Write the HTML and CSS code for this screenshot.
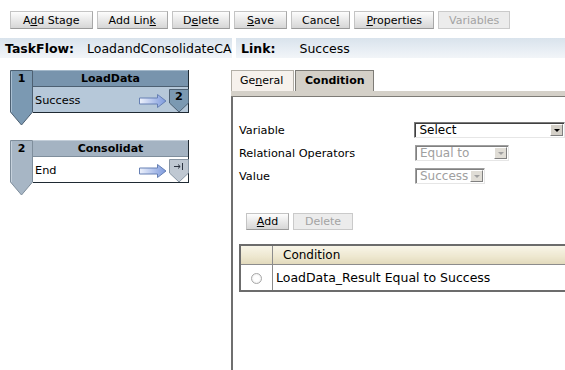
FILE: index.html
```html
<!DOCTYPE html>
<html lang="en">
<head>
    <meta charset="UTF-8">
    <title>TaskFlow Editor</title>
    <link rel="stylesheet" href="styles.css">
</head>
<body>
    <div class="toolbar">
        <button class="wide">A<u>d</u>d Stage</button>
        <button class="mid">Add Lin<u>k</u></button>
        <button>D<u>e</u>lete</button>
        <button class="wide"><u>S</u>ave</button>
        <button>Cance<u>l</u></button>
        <button class="mid"><u>P</u>roperties</button>
        <button class="disabled">Variables</button>
    </div>

    <div class="infobar">
        <div class="info taskflow"><b>TaskFlow:</b><span>LoadandConsolidateCA</span></div>
        <div class="info link"><b>Link:</b><span>Success</span></div>
    </div>

    <div class="main">
        <div class="canvas">
            <div class="stage">
                <div class="stage-num">
                    <svg width="24" height="56" viewBox="0 0 24 56"><polygon points="0.5,0.5 22.5,0.5 22.5,42 11.5,55 0.5,42" fill="#7b99b2" stroke="#4d6072"/><line x1="1.5" y1="1.5" x2="1.5" y2="42" stroke="#a9bfd2"/></svg>
                    <span>1</span>
                </div>
                <div class="stage-box">
                    <div class="stage-title">LoadData</div>
                    <div class="stage-body">
                        <span>Success</span>
                        <svg class="arrow" width="28" height="14" viewBox="0 0 28 14"><defs><linearGradient id="ar" x1="0" x2="1"><stop offset="0" stop-color="#eef2fc"/><stop offset="1" stop-color="#7b98dc"/></linearGradient></defs><polygon points="0.5,4 18.5,4 18.5,0.5 27,7 18.5,13.5 18.5,10 0.5,10" fill="url(#ar)" stroke="#6680b4"/></svg>
                        <div class="badge">
                            <svg width="20" height="24" viewBox="0 0 20 24"><polygon points="0.5,0.5 19.5,0.5 19.5,14 10,23 0.5,14" fill="#7b99b2" stroke="#4d6072"/></svg>
                            <span>2</span>
                        </div>
                    </div>
                </div>
            </div>

            <div class="stage stage-end">
                <div class="stage-num">
                    <svg width="24" height="56" viewBox="0 0 24 56"><polygon points="0.5,0.5 22.5,0.5 22.5,42 11.5,55 0.5,42" fill="#a7b6c5" stroke="#7f8e9c"/><line x1="1.5" y1="1.5" x2="1.5" y2="42" stroke="#c6d1dc"/></svg>
                    <span>2</span>
                </div>
                <div class="stage-box">
                    <div class="stage-title">Consolidat</div>
                    <div class="stage-body">
                        <span>End</span>
                        <svg class="arrow" width="28" height="14" viewBox="0 0 28 14"><defs><linearGradient id="ar2" x1="0" x2="1"><stop offset="0" stop-color="#eef2fc"/><stop offset="1" stop-color="#7b98dc"/></linearGradient></defs><polygon points="0.5,4 18.5,4 18.5,0.5 27,7 18.5,13.5 18.5,10 0.5,10" fill="url(#ar2)" stroke="#6680b4"/></svg>
                        <div class="badge">
                            <svg width="20" height="24" viewBox="0 0 20 24"><polygon points="0.5,0.5 19.5,0.5 19.5,14 10,23 0.5,14" fill="#bfc8d2" stroke="#8795a3"/><path d="M5 7.5h6M9 5.5l2.2 2-2.2 2M13.5 4v7" fill="none" stroke="#2c3440"/></svg>
                        </div>
                    </div>
                </div>
            </div>
        </div>

        <div class="editor">
            <div class="tabs">
                <div class="tab">Ge<u>n</u>eral</div>
                <div class="tab active">Condition</div>
            </div>
            <div class="tab-strip"></div>
            <div class="panel">
                <div class="form-row">
                    <label>Variable</label>
                    <div class="select wide"><span>Select</span><i class="drop"></i></div>
                </div>
                <div class="form-row">
                    <label>Relational Operators</label>
                    <div class="select off op"><span>Equal to</span><i class="drop"></i></div>
                </div>
                <div class="form-row">
                    <label>Value</label>
                    <div class="select off val"><span>Success</span><i class="drop"></i></div>
                </div>

                <div class="actions">
                    <button><u>A</u>dd</button>
                    <button class="disabled">Delete</button>
                </div>

                <table class="grid">
                    <tr>
                        <th class="sel"></th>
                        <th>Condition</th>
                    </tr>
                    <tr>
                        <td class="sel"><span class="radio"></span></td>
                        <td>LoadData_Result Equal to Success</td>
                    </tr>
                </table>
            </div>
        </div>
    </div>
</body>
</html>
```

FILE: styles.css
```css
body {
    margin: 0;
    font-family: "DejaVu Sans", Verdana, sans-serif;
    font-size: 11px;
    color: #000;
    background: #fff;
    width: 565px;
    height: 370px;
    overflow: hidden;
}

button {
    font-family: inherit;
    font-size: 11px;
    height: 18px;
    padding: 0 10px;
    margin: 0;
    color: #000;
    background: linear-gradient(#fdfdfd, #e9e9e9 50%, #d6d6d6);
    border: 1px solid #c4c4c4;
    border-bottom-color: #9a9a9a;
    border-right-color: #a8a8a8;
    border-radius: 0;
}

button.wide {
    padding: 0 12px;
}

button.mid {
    padding: 0 11px;
}

button.disabled {
    color: #a3a3a3;
    background: #ececec;
    border-color: #cacaca;
}

.toolbar {
    display: flex;
    gap: 4px;
    padding: 11px 0 0 10px;
}

.toolbar .disabled {
    padding: 0 10px;
}

.infobar {
    display: flex;
    margin-top: 9px;
    height: 20px;
    font-size: 12.5px;
}

.info {
    display: flex;
    align-items: center;
    background: linear-gradient(#d9e3ec, #e8eef4 60%, #f2f5f8);
}

.info b {
    margin-left: 5px;
}

.taskflow {
    width: 232px;
}

.taskflow span {
    margin-left: 13px;
}

.link {
    flex: 1;
    margin-left: 4px;
}

.link span {
    margin-left: 24px;
}

.main {
    display: flex;
}

.canvas {
    flex: 0 0 231px;
    padding: 12px 0 0 10px;
    box-sizing: border-box;
}

.stage {
    display: flex;
    height: 56px;
    margin-bottom: 14px;
}

.stage-num {
    position: relative;
    width: 23px;
    height: 56px;
}

.stage-num svg {
    position: absolute;
    left: 0;
    top: 0;
}

.stage-num span {
    position: relative;
    display: block;
    padding-top: 2px;
    text-align: center;
    font-weight: bold;
    font-size: 11px;
}

.stage-box {
    width: 156px;
    height: 43px;
    border-right: 1px solid #1f2a33;
    border-bottom: 1px solid #1f2a33;
    box-sizing: border-box;
}

.stage-title {
    height: 17px;
    line-height: 16px;
    text-align: center;
    font-weight: bold;
    background: #7894ad;
    border-top: 1px solid #a3b8ca;
    border-bottom: 1px solid #4d6072;
    box-sizing: border-box;
}

.stage-body {
    position: relative;
    display: flex;
    align-items: center;
    height: 25px;
    padding: 2px 0 0 2px;
    box-sizing: border-box;
    background: #b6c8d9;
    font-size: 11.3px;
}

.stage-body span {
    flex: 1;
}

.stage-body .arrow {
    margin: 0 21px 0 0;
}

.badge {
    position: absolute;
    right: -1px;
    top: 2px;
    width: 20px;
    height: 24px;
}

.badge svg {
    position: absolute;
    left: 0;
    top: 0;
}

.badge span {
    position: relative;
    display: block;
    text-align: center;
    font-weight: bold;
    padding-top: 1px;
}

.stage-end .stage-title {
    background: #a4b3c2;
    border-top-color: #c3ced9;
    border-bottom-color: #7f8e9c;
}

.stage-end .stage-body {
    background: #fff;
}

.editor {
    flex: 1;
    min-width: 0;
    display: flex;
    flex-direction: column;
    padding-top: 12px;
    height: 312px;
    box-sizing: border-box;
}

.tabs {
    display: flex;
}

.tab {
    height: 21px;
    line-height: 20px;
    padding: 0 8px;
    box-sizing: border-box;
    background: #f6f1ec;
    border: 1px solid #b2aea6;
    border-bottom: none;
}

.tab:first-child {
    width: 63px;
}

.tab.active {
    width: 79px;
    margin-left: 1px;
    padding-left: 9px;
    background: #d4d0c8;
    border-color: #7d7b76;
    font-weight: bold;
}

.tab-strip {
    height: 6px;
    background: #d4d0c8;
    border-bottom: 1px solid #7d7b76;
    box-sizing: border-box;
}

.panel {
    flex: 1;
    border-left: 2px solid #6f6f6f;
    padding: 25px 0 0 6px;
}

.form-row {
    display: flex;
    align-items: center;
    height: 16px;
    margin-bottom: 7px;
}

.form-row label {
    width: 176px;
    font-size: 11.3px;
}

.select {
    display: flex;
    align-items: center;
    height: 16px;
    box-sizing: border-box;
    border: 1px solid;
    border-color: #7a7a7a #e6e6e6 #e6e6e6 #7a7a7a;
    box-shadow: inset 1px 1px 0 #404040;
    padding: 0 1px 0 4px;
    font-size: 12px;
    background: #fff;
}

.select span {
    flex: 1;
}

.drop {
    width: 13px;
    height: 12px;
    box-sizing: border-box;
    background: #d4d0c8;
    border: 1px solid;
    border-color: #fff #808080 #808080 #fff;
    position: relative;
}

.drop::after {
    content: "";
    position: absolute;
    left: 3px;
    top: 4px;
    border: 3px solid transparent;
    border-top: 3px solid #000;
    border-bottom: none;
}

.select.wide {
    width: 151px;
}

.select.op {
    width: 94px;
}

.select.val {
    width: 70px;
}

.select.off {
    color: #a0a0a0;
    border-color: #a0a0a0 #e6e6e6 #e6e6e6 #a0a0a0;
    box-shadow: inset 1px 1px 0 #808080;
}

.select.off .drop::after {
    border-top-color: #a0a0a0;
}

.select.off .drop {
    background: #e0ddd6;
}

.actions {
    display: flex;
    gap: 4px;
    margin: 29px 0 0 7px;
}

.actions button {
    height: 17px;
    padding: 0 11px;
}

.actions button:first-child {
    width: 43px;
    padding: 0;
}

.grid {
    margin-top: 14px;
    width: 100%;
    border-collapse: collapse;
    border: 2px solid #6c6c6c;
    border-right: none;
    font-size: 12.5px;
}

.grid th {
    height: 18px;
    padding: 0 0 0 10px;
    text-align: left;
    font-weight: normal;
    font-size: 12px;
    background: linear-gradient(#f8f5e8, #ede7cf 60%, #e2dabd);
    border-bottom: 1px solid #8c8c8c;
    border-left: 1px solid #8c8c8c;
}

.grid td {
    height: 25px;
    padding: 0 0 0 3px;
    border-left: 1px solid #8c8c8c;
}

.grid .sel {
    width: 31px;
    padding: 0;
    border-left: none;
    text-align: center;
}

.radio {
    display: inline-block;
    width: 9px;
    height: 9px;
    border: 1px solid #a8a8a8;
    border-radius: 50%;
    background: radial-gradient(#fff 40%, #e4e4e4);
    vertical-align: middle;
}
```
